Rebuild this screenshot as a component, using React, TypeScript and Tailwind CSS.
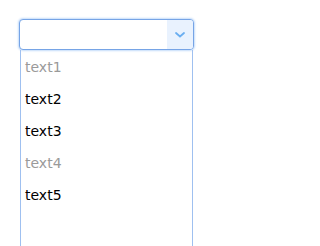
const items = [
  { label: "text1", disabled: true },
  { label: "text2", disabled: false },
  { label: "text3", disabled: false },
  { label: "text4", disabled: true },
  { label: "text5", disabled: false },
];

const App = () => {
  return (
    <div
      className="h-[246px] w-[279px] overflow-hidden bg-white pl-[19px] pt-[19px]"
      style={{ fontFamily: '"DejaVu Sans", Verdana, sans-serif' }}
    >
      <div className="w-[175px]">
        {/* Select box */}
        <div className="flex h-[31px] overflow-hidden rounded-[4px] border border-[#76a4e6] bg-white shadow-[0_0_2px_1px_#c4dcfa]">
          <div className="flex-1" />
          <div className="flex w-[26px] items-center justify-center bg-[#e9f2fe]">
            <svg width="10" height="6" viewBox="0 0 10 6" fill="none">
              <path d="M1 1l4 3.5L9 1" stroke="#6aaef0" strokeWidth="1.8" strokeLinecap="round" />
            </svg>
          </div>
        </div>

        {/* Dropdown list */}
        <ul className="mx-[1px] h-[220px] border-x border-[#9fc0f0] pl-[4px] pt-[1px] text-[14px]">
          {items.map((item) => (
            <li
              key={item.label}
              className={`h-[32px] leading-[32px] ${item.disabled ? "text-[#9a9a9a]" : "text-black"}`}
            >
              {item.label}
            </li>
          ))}
        </ul>
      </div>
    </div>
  );
};

export default App;
